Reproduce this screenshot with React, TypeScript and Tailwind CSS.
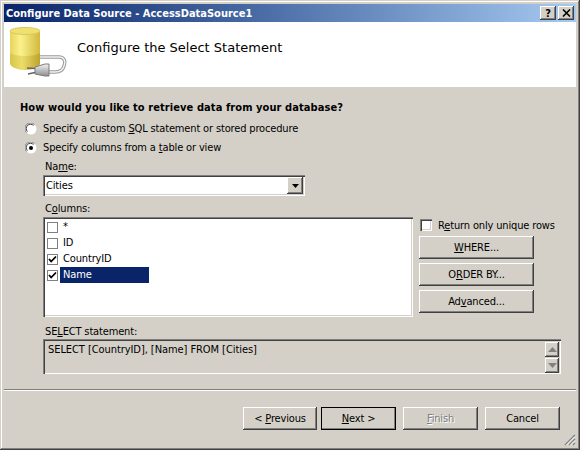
const raised = "shadow-[inset_-1px_-1px_0_#404040,inset_1px_1px_0_#ffffff,inset_-2px_-2px_0_#808080]";
const sunken = "shadow-[inset_1px_1px_0_#808080,inset_2px_2px_0_#404040,inset_-1px_-1px_0_#ffffff,inset_-2px_-2px_0_#d4d0c8]";

function U({ children }: { children: string }) {
  return <span className="underline underline-offset-1">{children}</span>;
}

function Radio({ on }: { on?: boolean }) {
  return (
    <svg width="12" height="12" viewBox="0 0 12 12" className="shrink-0">
      <circle cx="6" cy="6" r="5.5" fill="#ffffff" />
      <path d="M1.5 9.5A5.5 5.5 0 0 1 9.5 1.5" fill="none" stroke="#808080" />
      <path d="M2.5 8.5A4 4 0 0 1 8.5 2.5" fill="none" stroke="#404040" />
      {on && <circle cx="6" cy="6" r="2" fill="#000000" />}
    </svg>
  );
}

function Check({ on }: { on?: boolean }) {
  return (
    <span className="w-[11px] h-[11px] shrink-0 bg-white border border-[#808080] flex items-center justify-center">
      {on && (
        <svg width="9" height="9" viewBox="0 0 9 9">
          <path d="M1 4L3.2 6.5L8 1.5" fill="none" stroke="#000000" strokeWidth="1.8" />
        </svg>
      )}
    </span>
  );
}

function Row({ label, on, sel }: { label: string; on?: boolean; sel?: boolean }) {
  return (
    <div className="flex items-center h-[16px]">
      <Check on={on} />
      <span className={`ml-[2px] h-[16px] w-[89px] pl-[3px] leading-[16px] ${sel ? "bg-[#0a246a] text-white" : ""}`}>{label}</span>
    </div>
  );
}

function SideButton({ children }: { children: React.ReactNode }) {
  return <div className={`h-[23px] w-[115px] flex items-center justify-center ${raised}`}><span>{children}</span></div>;
}

function NavButton({ children, w, className = "" }: { children: React.ReactNode; w: string; className?: string }) {
  return <div className={`h-[23px] flex items-center justify-center ${w} ${className}`}><span>{children}</span></div>;
}

function Database() {
  return (
    <svg width="60" height="56" viewBox="0 0 60 56" className="shrink-0">
      <defs>
        <linearGradient id="can" x1="0" x2="1" y1="0" y2="0">
          <stop offset="0" stopColor="#e6d45c" />
          <stop offset="0.35" stopColor="#fbf28c" />
          <stop offset="1" stopColor="#d2b83e" />
        </linearGradient>
        <linearGradient id="low" x1="0" x2="1" y1="0" y2="0">
          <stop offset="0" stopColor="#d9c54a" />
          <stop offset="0.4" stopColor="#ecdc6a" />
          <stop offset="1" stopColor="#bda32e" />
        </linearGradient>
        <linearGradient id="plug" x1="0" x2="0" y1="0" y2="1">
          <stop offset="0" stopColor="#f2f2f2" />
          <stop offset="1" stopColor="#8e8e8e" />
        </linearGradient>
      </defs>
      <path d="M1 6V38C1 42 9 45 16 45S31 42 31 38V6Z" fill="url(#can)" />
      <path d="M1 28C6 32 26 32 31 28V38C31 42 23 45 16 45S1 42 1 38Z" fill="url(#low)" />
      <ellipse cx="16" cy="6" rx="15" ry="3.5" fill="#f0e070" stroke="#d8c860" />
      <path d="M31 32H50C55 32 57 36 55 41C54 45 51 47 46 47H38" fill="none" stroke="#9a9a9a" strokeWidth="3.4" />
      <path d="M31 32H50C55 32 57 36 55 41C54 45 51 47 46 47H38" fill="none" stroke="#f2f2f2" strokeWidth="1.4" />
      <path d="M26 42L36 39H40V51H36L26 49Z" fill="url(#plug)" stroke="#7c7c7c" />
      <path d="M18 43L26 43.5M19 49L26 47.5" stroke="#666666" strokeWidth="1.6" />
    </svg>
  );
}

export default function App() {
  return (
    <div className="w-[581px] h-[451px] bg-white overflow-hidden text-[11px] leading-[13px] tracking-[-0.15px] text-black font-['DejaVu_Sans_Condensed','Liberation_Sans',sans-serif]">
      <div className="w-[580px] h-[450px] bg-[#d4d0c8] relative p-[4px] shadow-[inset_-1px_-1px_0_#404040,inset_1px_1px_0_#d4d0c8,inset_-2px_-2px_0_#808080,inset_2px_2px_0_#ffffff]">
        <div className="h-[18px] pl-[2px] pr-[2px] flex items-center justify-between bg-gradient-to-r from-[#0a246a] to-[#a6caf0]">
          <span className="text-white font-bold text-[11px] tracking-normal">Configure Data Source - AccessDataSource1</span>
          <div className="flex gap-[2px]">
            <div className={`w-[16px] h-[14px] bg-[#d4d0c8] flex items-center justify-center font-bold text-[11px] ${raised}`}>?</div>
            <div className={`w-[16px] h-[14px] bg-[#d4d0c8] flex items-center justify-center ${raised}`}>
              <svg width="9" height="8" viewBox="0 0 9 8"><path d="M1 0.5L8 7.5M8 0.5L1 7.5" stroke="#000000" strokeWidth="1.6" /></svg>
            </div>
          </div>
        </div>

        <div className="h-[65px] bg-white flex items-start pl-[5px] pt-[3px]">
          <Database />
          <span className="ml-[8px] mt-[15px] text-[13px] leading-[16px] tracking-normal font-['DejaVu_Sans',sans-serif]">Configure the Select Statement</span>
        </div>

        <div className="pl-[16px] pt-[14px]">
          <div className="font-bold h-[13px] tracking-[0.08px]">How would you like to retrieve data from your database?</div>
          <div className="flex items-center gap-[6px] pl-[5px] mt-[8px] h-[13px]"><Radio /><span>Specify a custom <U>S</U>QL statement or stored procedure</span></div>
          <div className="flex items-center gap-[6px] pl-[5px] mt-[6px] h-[13px]"><Radio on /><span>Specify columns from a <U>t</U>able or view</span></div>

          <div className="pl-[23px]">
            <div className="mt-[6px] h-[13px] pl-[2px]">Na<U>m</U>e:</div>
            <div className={`mt-[2px] w-[262px] h-[21px] bg-white flex items-center pl-[3px] pr-[2px] justify-between ${sunken}`}>
              <span>Cities</span>
              <div className={`w-[16px] h-[17px] bg-[#d4d0c8] flex items-center justify-center ${raised}`}>
                <svg width="7" height="4" viewBox="0 0 7 4"><path d="M0 0H7L3.5 4Z" fill="#000000" /></svg>
              </div>
            </div>

            <div className="mt-[6px] h-[13px] pl-[2px]">C<U>o</U>lumns:</div>
            <div className="flex mt-[2px] items-start">
              <div className={`w-[370px] h-[100px] bg-white pl-[4px] pt-[2px] ${sunken}`}>
                <Row label="*" />
                <Row label="ID" />
                <Row label="CountryID" on />
                <Row label="Name" on sel />
              </div>
              <div className="ml-[6px] flex flex-col">
                <div className="flex items-center h-[14px] mt-[1px] pl-[1px]">
                  <span className={`w-[12px] h-[12px] shrink-0 bg-white ${sunken}`} />
                  <span className="ml-[6px] whitespace-nowrap">R<U>e</U>turn only unique rows</span>
                </div>
                <div className="flex flex-col gap-[4px] mt-[4px]">
                  <SideButton><U>W</U>HERE...</SideButton>
                  <SideButton>O<U>R</U>DER BY...</SideButton>
                  <SideButton>Ad<U>v</U>anced...</SideButton>
                </div>
              </div>
            </div>

            <div className="mt-[8px] h-[13px] pl-[2px]">SE<U>L</U>ECT statement:</div>
            <div className={`mt-[1px] w-[518px] h-[35px] flex justify-between pl-[5px] pr-[2px] pt-[2px] ${sunken}`}>
              <span className="mt-[2px] tracking-[-0.07px]">SELECT [CountryID], [Name] FROM [Cities]</span>
              <div className="flex flex-col gap-[1px] mt-[1px]">
                <div className={`w-[14px] h-[15px] flex items-center justify-center ${raised}`}>
                  <svg width="9" height="5" viewBox="0 0 9 5"><path d="M0 5H9L4.5 0Z" fill="#808080" /></svg>
                </div>
                <div className={`w-[14px] h-[15px] flex items-center justify-center ${raised}`}>
                  <svg width="9" height="5" viewBox="0 0 9 5"><path d="M0 0H9L4.5 5Z" fill="#808080" /></svg>
                </div>
              </div>
            </div>
          </div>
        </div>

        <div className="mt-[15px] h-[2px] bg-white border-t border-[#808080]" />

        <div className="flex pl-[239px] mt-[16px]">
          <NavButton w="w-[74px]" className={raised}>&lt; <U>P</U>revious</NavButton>
          <NavButton w="w-[75px] ml-[4px]" className={`outline outline-1 -outline-offset-1 outline-black ${raised}`}><U>N</U>ext &gt;</NavButton>
          <NavButton w="w-[75px] ml-[7px]" className={`text-[#808080] [text-shadow:1px_1px_0_#ffffff] ${raised}`}><U>F</U>inish</NavButton>
          <NavButton w="w-[75px] ml-[7px]" className={raised}>Cancel</NavButton>
        </div>

        <svg width="13" height="13" viewBox="0 0 13 13" className="absolute right-[4px] bottom-[4px]">
          <path d="M12 2L2 12M12 6L6 12M12 10L10 12" stroke="#808080" strokeWidth="1.4" />
          <path d="M12 3.5L3.5 12M12 7.5L7.5 12M12 11.5L11.5 12" stroke="#ffffff" />
        </svg>
      </div>
    </div>
  );
}
